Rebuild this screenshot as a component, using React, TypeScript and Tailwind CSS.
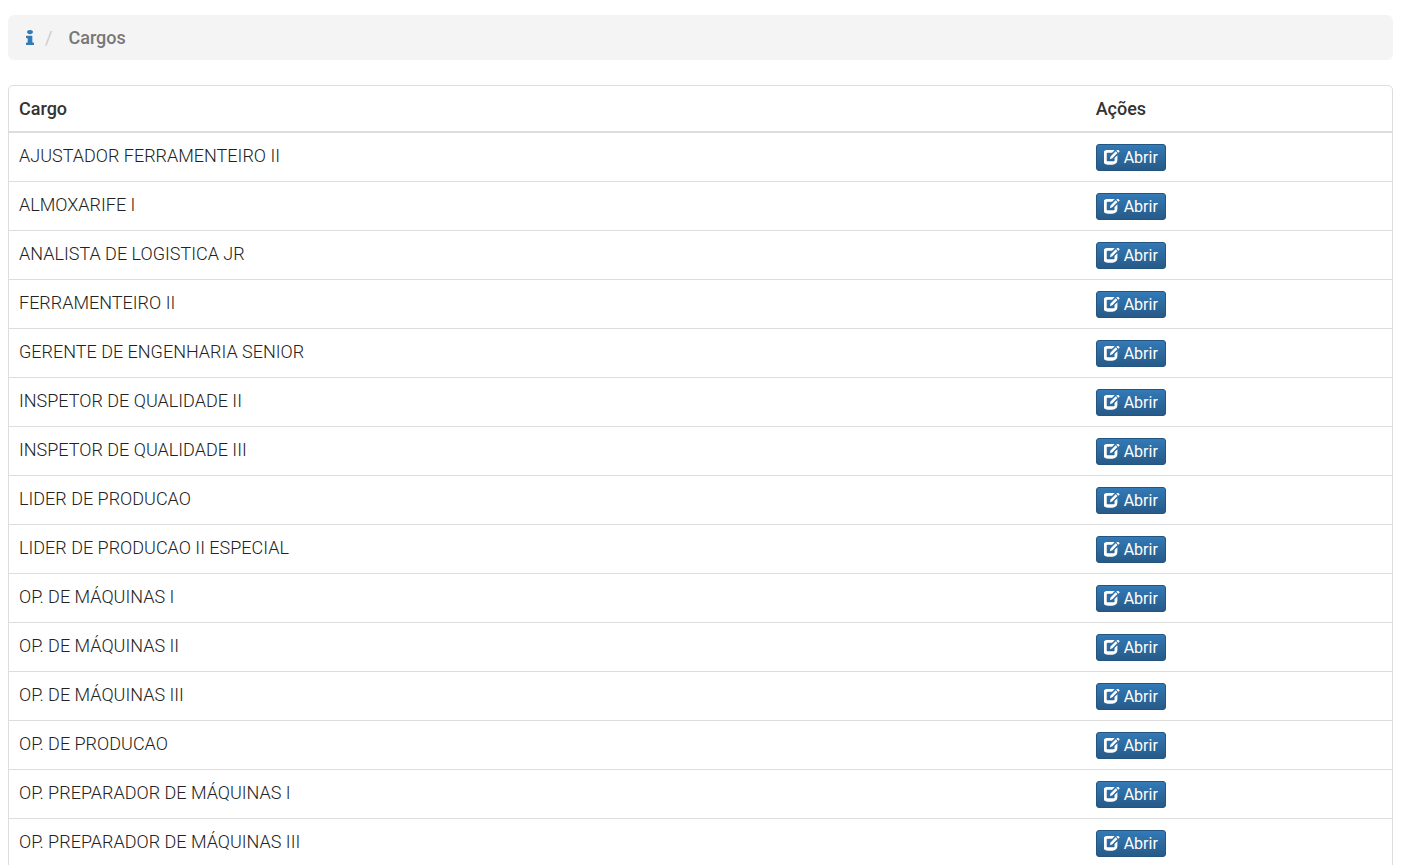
import { FaInfo } from "react-icons/fa";

const cargos = [
  "AJUSTADOR FERRAMENTEIRO II",
  "ALMOXARIFE I",
  "ANALISTA DE LOGISTICA JR",
  "FERRAMENTEIRO II",
  "GERENTE DE ENGENHARIA SENIOR",
  "INSPETOR DE QUALIDADE II",
  "INSPETOR DE QUALIDADE III",
  "LIDER DE PRODUCAO",
  "LIDER DE PRODUCAO II ESPECIAL",
  "OP. DE MÁQUINAS I",
  "OP. DE MÁQUINAS II",
  "OP. DE MÁQUINAS III",
  "OP. DE PRODUCAO",
  "OP. PREPARADOR DE MÁQUINAS I",
  "OP. PREPARADOR DE MÁQUINAS III",
];

function EditIcon() {
  return (
    <svg viewBox="90 190 1110 1110" className="size-4 shrink-0" fill="currentColor" aria-hidden="true">
      <path d="M350 180h350q60 0 127 23l-178 177h-299q-41 0-55.5 14.5t-14.5 55.5v450q0 41 14.5 55.5t55.5 14.5h400q41 0 55.5-14.5t14.5-55.5v-150l200-200v310q0 165-92.5 257.5t-257.5 92.5h-320q-165 0-257.5-92.5t-92.5-257.5v-330q0-165 92.5-257.5t257.5-92.5z" />
      <path d="M500 840l45-200 360-360 120 120-355 360z" />
      <path d="M950 235l65-65q25-25 50 0l95 95q25 25 0 50l-65 65z" />
    </svg>
  );
}

export default function App() {
  return (
    <main className="h-screen overflow-hidden bg-white pt-[15px] pr-[15px] pl-2 font-['Roboto',sans-serif] text-lg/6 text-[#333]">
      <nav aria-label="breadcrumb" className="mb-[25px] rounded-md bg-[#f4f4f4] px-[18px]">
        <ol className="flex h-[45px] items-center">
          <li>
            <a href="#" aria-label="Início" className="block text-[#337ab7]">
              <FaInfo className="h-[15px] w-2" preserveAspectRatio="none" />
            </a>
          </li>
          <li aria-hidden="true" className="pr-4 pl-[11px] text-[#ccc]">/</li>
          <li className="font-medium text-[#777]">Cargos</li>
        </ol>
      </nav>

      <div className="rounded-t-[5px] border border-[#ddd]">
        <table className="w-full table-fixed border-collapse text-left">
          <thead>
            <tr className="h-[46px] border-b-2 border-[#ddd]">
              <th className="w-7/9 px-[10px] font-medium">Cargo</th>
              <th className="px-[11px] font-medium">Ações</th>
            </tr>
          </thead>
          <tbody className="text-[#222]">
            {cargos.map((cargo) => (
              <tr key={cargo} className="h-[49px] border-b border-[#ddd]">
                <td className="px-[10px] pb-0.5 font-light">{cargo}</td>
                <td className="px-[11px] pt-0.5">
                  <button
                    type="button"
                    className="flex h-[27px] items-center gap-1 rounded-[3px] border border-[#245580] bg-linear-to-b from-[#337ab7] to-[#265a88] px-[7px] text-base text-white"
                  >
                    <EditIcon />
                    Abrir
                  </button>
                </td>
              </tr>
            ))}
          </tbody>
        </table>
      </div>
    </main>
  );
}
